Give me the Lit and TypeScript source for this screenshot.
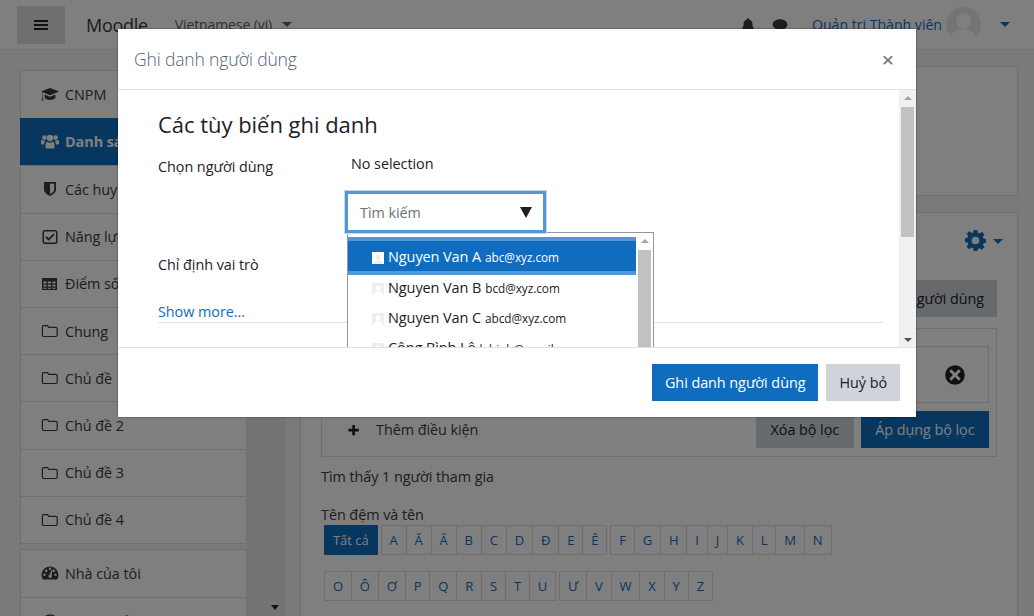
import {LitElement, css, html, svg} from 'lit';
import {customElement} from 'lit/decorators.js';

const ICONS: Record<string, unknown> = {
  cap: svg`<path d="M9 2 0 5.600l9 3.600 9-3.600zM3.600 8.600v3.200C5 13.400 7 14 9 14s4-.6 5.400-2.200V8.600L9 10.800zM1.400 6.800v4.600l-.8 3h2l-.7-3V7z"/>`,
  users: svg`<circle cx="9" cy="5" r="3.200"/><circle cx="3.400" cy="4.600" r="2.300"/><circle cx="14.600" cy="4.600" r="2.300"/><path d="M4.600 14.400c-.5-3.600.6-5.600 2-5.600.6.6 1.500 1 2.400 1s1.800-.4 2.400-1c1.400 0 2.500 2 2 5.600-.2.8-1 1.200-1.800 1.200H6.400c-.8 0-1.600-.4-1.800-1.200zM0 8.600C0 7.400.8 7 1.600 7c.8.6 1.600.9 2.600.8-.8 1-1 2.200-1 3.700H1.200C.5 11.500 0 11 0 10.300zM18 8.600C18 7.400 17.200 7 16.400 7c-.8.6-1.600.9-2.600.8.8 1 1 2.200 1 3.700h2c.7 0 1.200-.5 1.200-1.200z"/>`,
  shield: svg`<path fill-rule="evenodd" d="M3 2h12v7.500c0 3-3.500 5.500-6 6.500-2.500-1-6-3.500-6-6.500zm6 1.800v10.300c1.800-.9 4.200-2.700 4.200-4.600V3.800z"/>`,
  check: svg`<path fill-rule="evenodd" d="M4 2h10a2.500 2.500 0 0 1 2.500 2.500v9A2.500 2.500 0 0 1 14 16H4a2.500 2.500 0 0 1-2.500-2.500v-9A2.500 2.500 0 0 1 4 2zm0 1.500a1 1 0 0 0-1 1v9a1 1 0 0 0 1 1h10a1 1 0 0 0 1-1v-9a1 1 0 0 0-1-1zm3.600 9.300L4.300 9.500l1.300-1.300 2 2 4.800-4.800 1.300 1.300z"/>`,
  table: svg`<path fill-rule="evenodd" d="M1 3h15v12H1zm1.300 3.500v2h3.200v-2zm4.500 0v2h3.200v-2zm4.500 0v2h3.200v-2zM2.300 9.800v1.800h3.200V9.800zm4.500 0v1.800h3.200V9.800zm4.500 0v1.800h3.200V9.800zM2.300 12.800v1h3.200v-1zm4.500 0v1h3.200v-1zm4.500 0v1h3.200v-1z"/>`,
  folder: svg`<path fill="none" stroke="currentColor" stroke-width="1.200" d="M2.800 3.600h3.600l1.500 1.800h6.900c.8 0 1.400.6 1.400 1.400v6.300c0 .8-.6 1.400-1.400 1.400H2.800c-.8 0-1.400-.6-1.400-1.400V5c0-.8.6-1.400 1.400-1.400z"/>`,
  gauge: svg`<path fill-rule="evenodd" d="M9 2.500C4.200 2.500.6 6.200.6 11c0 1.500.4 2.900 1 4.100.2.300.5.400.8.400h13.200c.3 0 .6-.1.8-.4.600-1.200 1-2.600 1-4.100 0-4.800-3.600-8.500-8.400-8.500zM3.500 12a1.200 1.200 0 1 1 0-2.400 1.200 1.200 0 0 1 0 2.400zm1.700-4a1.200 1.200 0 1 1 0-2.400 1.200 1.200 0 0 1 0 2.400zM9 6a1.200 1.200 0 1 1 0-2.400A1.200 1.200 0 0 1 9 6zm1.400 7.500a1.800 1.800 0 0 1-3-1.600c.2-.6.700-1 1.200-1.100l1.900-4.800 1 .3-1 5c.4.600.4 1.500-.1 2.200zM12.800 8a1.200 1.200 0 1 1 0-2.400 1.200 1.200 0 0 1 0 2.400zm1.700 4a1.200 1.200 0 1 1 0-2.400 1.200 1.200 0 0 1 0 2.400z"/>`,
  plus: svg`<path d="M6.800 2.500h3.400v5h5v3.400h-5v5H6.800v-5h-5V7.500h5z"/>`,
  xcircle: svg`<path fill-rule="evenodd" d="M9 1a8 8 0 1 1 0 16A8 8 0 0 1 9 1zM6 4.300 4.300 6l3 3-3 3L6 13.700l3-3 3 3 1.700-1.700-3-3 3-3L12 4.300l-3 3z"/>`,
  cog: svg`<path fill-rule="evenodd" d="M7.500 0h3l.5 2.400 1.500.6 2-1.400 2.200 2.200-1.400 2 .6 1.500 2.400.5v3l-2.400.5-.6 1.500 1.400 2-2.200 2.200-2-1.400-1.500.6-.5 2.400h-3L7 15.600l-1.500-.6-2 1.400-2.200-2.200 1.400-2-.6-1.500L-.3 10.200v-3l2.400-.5.6-1.500-1.400-2 2.200-2.200 2 1.400L7 2.400zM9 5.700a3.300 3.300 0 1 0 0 6.600 3.300 3.300 0 0 0 0-6.600z"/>`,
  bell: svg`<path d="M9 1c.6 0 1 .4 1 1v.7c2.500.5 4 2.500 4 5 0 3.500 1 5 2.500 6.300v1H1.500v-1C3 12.700 4 11.200 4 7.700c0-2.500 1.500-4.500 4-5V2c0-.6.4-1 1-1zM7 16.500h4a2 2 0 0 1-4 0z"/>`,
  chat: svg`<path d="M9 2.500c4.700 0 8.300 2.700 8.300 6s-3.600 6-8.300 6c-.8 0-1.500-.1-2.200-.2-1 .9-2.500 1.600-4.300 1.800.8-.9 1.400-1.900 1.600-3C2 11.900.7 10.300.7 8.500c0-3.300 3.600-6 8.300-6z"/>`,
};

const icon = (name: string, cls = '') =>
  html`<svg class="ic ${cls}" viewBox="0 0 18 18" fill="currentColor">${ICONS[name]}</svg>`;

const NAV_TOP = [
  ['cap', 'CNPM'],
  ['users', 'Danh sách thành viên'],
  ['shield', 'Các huy hiệu'],
  ['check', 'Năng lực'],
  ['table', 'Điểm số'],
  ['folder', 'Chung'],
  ['folder', 'Chủ đề 1'],
  ['folder', 'Chủ đề 2'],
  ['folder', 'Chủ đề 3'],
  ['folder', 'Chủ đề 4'],
];

const ROW_ONE = [['A', 'Ă', 'Â', 'B', 'C', 'D', 'Đ', 'E', 'Ê'], ['F', 'G', 'H', 'I', 'J', 'K', 'L', 'M', 'N']];
const ROW_TWO = [['O', 'Ô', 'Ơ', 'P', 'Q', 'R', 'S', 'T', 'U'], ['Ư', 'V', 'W', 'X', 'Y', 'Z']];

const PEOPLE = [
  ['Nguyen Van A', 'abc@xyz.com'],
  ['Nguyen Van B', 'bcd@xyz.com'],
  ['Nguyen Van C', 'abcd@xyz.com'],
  ['Công Bình Lê', 'lebinh@gmail.com'],
];

@customElement('app-root')
export class AppRoot extends LitElement {
  static styles = css`
    :host {
      display: block;
      position: relative;
      width: 1034px;
      height: 616px;
      overflow: hidden;
      background: #f4f4f4;
      color: #373a3c;
      font-family: 'Open Sans', 'Liberation Sans', sans-serif;
      font-size: 14.4px;
      letter-spacing: -0.05px;
    }
    .ic { width: 16px; height: 16px; flex: none; display: block; }
    .caret { width: 0; height: 0; border-left: 5px solid transparent; border-right: 5px solid transparent; border-top: 5px solid currentColor; }

    .navbar { height: 50px; box-sizing: border-box; background: #fff; border-bottom: 1px solid #eaeaea; display: flex; align-items: center; padding-left: 17px; }
    .burger { width: 48px; height: 38px; background: #dcdfe3; display: flex; flex-direction: column; align-items: center; justify-content: center; gap: 2px; }
    .burger i { width: 14px; height: 2px; background: #1d2125; }
    .brand { margin-left: 21px; font-size: 18px; letter-spacing: -0.3px; }
    .lang { margin-left: 27px; display: flex; align-items: center; gap: 10px; color: #5a5f63; font-size: 14px; letter-spacing: -0.1px; }
    .spacer { flex: 1; }
    .bell { margin-right: 16px; }
    .user { color: #0f6cbf; font-size: 14.2px; margin-left: 24px; }
    .avatar { width: 35px; height: 35px; margin-left: 4px; border-radius: 50%; background: #e9e9e9; overflow: hidden; }
    .user-caret { color: #0f6cbf; margin: 0 24px 0 19px; }

    .content { display: flex; height: 566px; }
    .drawer { width: 285px; flex: none; box-sizing: border-box; padding: 20px 38px 0 20px; background: linear-gradient(90deg, #f4f4f4 247px, #e9e9e9 247px); position: relative; }
    .scroll-down { position: absolute; left: 271px; bottom: 6px; border-left: 4px solid transparent; border-right: 4px solid transparent; border-top: 5px solid #222; }
    .menu { background: #fff; border: 1px solid #ddd; margin-bottom: 5px; }
    .menu a { height: 47.2px; box-sizing: border-box; display: flex; align-items: center; gap: 6px; padding-left: 20px; border-top: 1px solid #ddd; white-space: nowrap; overflow: hidden; }
    .menu a .ic { width: 18px; height: 18px; }
    .menu a:first-child { border-top: 0; }
    .menu a.on { background: #0f6cbf; color: #fff; font-weight: 700; margin: 0 -1px; padding-left: 21px; border-top: 0; }

    .main { flex: 1; padding: 16px 16px 0 15px; min-width: 0; }
    .card { background: #fff; border: 1px solid #ddd; box-sizing: border-box; }
    .card.first { height: 130px; margin-bottom: 16px; }
    .card.second { height: 500px; padding: 0 20px; }
    .tools { display: flex; justify-content: flex-end; align-items: center; gap: 7px; height: 67px; padding: 0 0 13px; margin-right: -6px; box-sizing: border-box; color: #0f6cbf; }
    .tools .ic { width: 21px; height: 21px; }
    .tools .caret { margin-top: 3px; }
    .enrol-row { display: flex; justify-content: flex-end; }
    .btn { display: flex; align-items: center; justify-content: center; height: 37px; box-sizing: border-box; padding: 0 13px; background: #ced4da; color: #1d2125; white-space: nowrap; }
    .btn.primary { background: #0f6cbf; color: #fff; }
    .filter { margin-top: 11px; height: 129px; box-sizing: border-box; border: 1px solid #ddd; padding: 17px 7px 0 25px; }
    .cond { height: 57px; box-sizing: border-box; border: 1px solid #ddd; display: flex; justify-content: flex-end; align-items: center; padding-right: 22px; color: #1d2125; }
    .cond .ic { width: 22px; height: 22px; }
    .add { display: flex; align-items: center; margin-top: 8px; }
    .add .ic { width: 14px; height: 14px; color: #1d2125; margin-right: 15px; }
    .add .btn { padding: 0 14.5px; }
    .add .btn + .btn { margin-left: 7px; }
    .found { margin: 10px 0 18px; line-height: 20px; }
    .alpha-title { line-height: 20px; }
    .bar { display: flex; gap: 3px; padding-left: 3px; margin-bottom: 16px; }
    .bar-group { display: flex; height: 30px; border: 1px solid #ddd; box-sizing: border-box; }
    .bar-group span { display: flex; align-items: center; padding: 0 7.9px; border-left: 1px solid #ddd; color: #0f6cbf; font-size: 13px; letter-spacing: 0; }
    .bar-group span:first-child { border-left: 0; }
    .bar-group.all { background: #0f6cbf; border-color: #0f6cbf; }
    .bar-group.all span { color: #fff; }

    .backdrop { position: absolute; inset: 0; background: rgba(0, 0, 0, 0.5); }

    .modal { position: absolute; left: 118px; top: 29px; width: 798px; height: 388px; background: #fff; display: flex; flex-direction: column; box-shadow: 0 0 2px rgba(0, 0, 0, 0.5); }
    .m-head { height: 61px; flex: none; box-sizing: border-box; border-bottom: 1px solid #dee2e6; display: flex; align-items: center; justify-content: space-between; padding: 0 22px 0 16px; }
    .m-title { font-size: 17.5px; font-weight: 300; color: #4f6478; letter-spacing: -0.14px; }
    .m-close { font-size: 21px; color: #6a6a6a; line-height: 1; font-family: 'Liberation Sans', sans-serif; }
    .m-body { flex: 1; display: flex; min-height: 0; }
    .m-scroll { flex: 1; min-width: 0; position: relative; overflow: hidden; padding: 0 16px 0 40px; }
    h3 { margin: 19px 0 0; font-size: 22px; font-weight: 400; line-height: 30px; color: #1d2125; letter-spacing: -0.03px; }
    .field { display: flex; color: #1d2125; }
    .field label { width: 193px; flex: none; line-height: 20px; }
    .pick { margin-top: 15px; height: 101px; }
    .pick label { padding-top: 3px; }
    .sel-none { line-height: 20px; }
    .combo { position: absolute; left: 226px; top: 100px; width: 203px; height: 44px; box-sizing: border-box; border: 4px solid #5596d6; outline: 1px solid #c2daf1; outline-offset: -1px; display: flex; align-items: center; justify-content: space-between; padding: 0 11px 0 12px; color: #6a737b; background: #fff; z-index: 2; }
    .combo b { border-left: 6px solid transparent; border-right: 6px solid transparent; border-top: 11px solid #1d2125; }
    .list { position: absolute; left: 229px; top: 142px; width: 307px; height: 130px; box-sizing: border-box; border: 1px solid #8f98a3; background: #fff; display: flex; z-index: 1; overflow: hidden; }
    .opts { flex: 1; padding-top: 4px; }
    .opt { height: 30.3px; display: flex; align-items: center; padding-left: 24px; color: #1d2125; white-space: nowrap; }
    .opt.on { height: 38px; box-sizing: border-box; background: #0f6cbf; color: #fff; border-top: 4px solid #5596d6; border-bottom: 4px solid #5596d6; margin-bottom: -3px; }
    .opt svg { width: 12px; height: 12px; flex: none; margin: 3px 4px 0 0; }
    .opt .nm { font-size: 14.5px; letter-spacing: -0.1px; }
    .opt .em { font-size: 11.8px; margin-left: 4px; padding-top: 2px; }
    .sb { width: 17px; flex: none; background: #f1f1f1; display: flex; flex-direction: column; align-items: center; box-sizing: border-box; }
    .up { border-left: 4px solid transparent; border-right: 4px solid transparent; border-bottom: 4px solid #a3a3a3; margin-top: 6px; }
    .down { border-left: 4px solid transparent; border-right: 4px solid transparent; border-top: 4px solid #505050; position: absolute; bottom: 5px; }
    .thumb { width: 13px; background: #c1c1c1; margin-top: 7px; }
    .sb.outer { position: relative; }
    .sb.outer .thumb { height: 130px; }
    .sb.inner { background: #fff; }
    .sb.inner .thumb { flex: 1; }
    .more { color: #0f6cbf; margin-top: 27px; line-height: 20px; }
    .rule { border-top: 1px solid #dee2e6; }
    .m-foot { height: 70px; flex: none; box-sizing: border-box; border-top: 1px solid #dee2e6; display: flex; justify-content: flex-end; align-items: flex-start; padding: 16px 16px 0 0; gap: 8px; }
  `;

  private renderBar(groups: string[][]) {
    return groups.map(g => html`<div class="bar-group">${g.map(l => html`<span>${l}</span>`)}</div>`);
  }

  private renderPerson(p: string[], i: number) {
    const on = i === 0;
    return html`<div class="opt ${on ? 'on' : ''}">
      <svg viewBox="0 0 12 12"><rect width="12" height="12" fill="${on ? '#fff' : '#eee'}"/><circle cx="6" cy="5" r="2.6" fill="${on ? '#eee' : '#fff'}"/><path d="M1.500 12c0-2.500 2-4 4.500-4s4.500 1.500 4.500 4z" fill="${on ? '#eee' : '#fff'}"/></svg>
      <span class="nm">${p[0]}</span><span class="em">${p[1]}</span>
    </div>`;
  }

  render() {
    return html`
      <div class="navbar">
        <div class="burger"><i></i><i></i><i></i></div>
        <div class="brand">Moodle</div>
        <div class="lang">Vietnamese (vi) <span class="caret"></span></div>
        <div class="spacer"></div>
        <span class="bell">${icon('bell')}</span>
        ${icon('chat')}
        <span class="user">Quản trị Thành viên</span>
        <div class="avatar"><svg viewBox="0 0 35 35" width="35" height="35"><circle cx="17.5" cy="14" r="7.5" fill="#fff"/><path d="M4 35c0-9 6-13 13.500-13S31 26 31 35z" fill="#fff"/></svg></div>
        <span class="caret user-caret"></span>
      </div>
      <div class="content">
        <div class="drawer">
          <div class="menu">
            ${NAV_TOP.map(([ic, label], i) => html`<a class="${i === 1 ? 'on' : ''}">${icon(ic)}${label}</a>`)}
          </div>
          <div class="menu">
            <a>${icon('gauge')}Nhà của tôi</a>
            <a>${icon('gauge')}Trang chủ</a>
          </div>
          <span class="scroll-down"></span>
        </div>
        <div class="main">
          <div class="card first"></div>
          <div class="card second">
            <div class="tools">${icon('cog')}<span class="caret"></span></div>
            <div class="enrol-row"><div class="btn">Ghi danh người dùng</div></div>
            <div class="filter">
              <div class="cond">${icon('xcircle')}</div>
              <div class="add">
                ${icon('plus')}<span>Thêm điều kiện</span><span class="spacer"></span>
                <div class="btn">Xóa bộ lọc</div>
                <div class="btn primary">Áp dụng bộ lọc</div>
              </div>
            </div>
            <div class="found">Tìm thấy 1 người tham gia</div>
            <div class="alpha-title">Tên đệm và tên</div>
            <div class="bar"><div class="bar-group all"><span>Tất cả</span></div>${this.renderBar(ROW_ONE)}</div>
            <div class="bar">${this.renderBar(ROW_TWO)}</div>
          </div>
        </div>
      </div>

      <div class="backdrop"></div>

      <div class="modal">
        <div class="m-head">
          <span class="m-title">Ghi danh người dùng</span>
          <span class="m-close">×</span>
        </div>
        <div class="m-body">
          <div class="m-scroll">
            <h3>Các tùy biến ghi danh</h3>
            <div class="field pick"><label>Chọn người dùng</label><div class="sel-none">No selection</div></div>
            <div class="field"><label>Chỉ định vai trò</label></div>
            <div class="more">Show more...</div>
            <div class="rule"></div>
            <div class="combo"><span>Tìm kiếm</span><b></b></div>
            <div class="list">
              <div class="opts">${PEOPLE.map((p, i) => this.renderPerson(p, i))}</div>
              <div class="sb inner"><span class="up"></span><div class="thumb"></div></div>
            </div>
          </div>
          <div class="sb outer"><span class="up"></span><div class="thumb"></div><span class="down"></span></div>
        </div>
        <div class="m-foot">
          <div class="btn primary">Ghi danh người dùng</div>
          <div class="btn">Huỷ bỏ</div>
        </div>
      </div>
    `;
  }
}
